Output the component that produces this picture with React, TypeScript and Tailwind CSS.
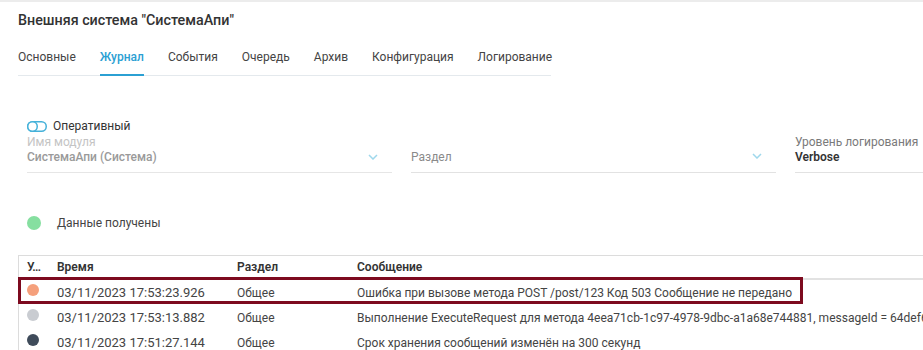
import React from "react";

const tabs = ["Основные", "Журнал", "События", "Очередь", "Архив", "Конфигурация", "Логирование"];

const rows = [
  {
    dot: "bg-[#f5a07c]",
    time: "03/11/2023 17:53:23.926",
    section: "Общее",
    message: "Ошибка при вызове метода POST /post/123 Код 503 Сообщение не передано",
  },
  {
    dot: "bg-[#c9ccd1]",
    time: "03/11/2023 17:53:13.882",
    section: "Общее",
    message: "Выполнение ExecuteRequest для метода 4eea71cb-1c97-4978-9dbc-a1a68e744881, messageId = 64def6",
  },
  {
    dot: "bg-[#3f4b5a]",
    time: "03/11/2023 17:51:27.144",
    section: "Общее",
    message: "Срок хранения сообщений изменён на 300 секунд",
  },
];

function Chevron() {
  return (
    <svg width="10" height="6" viewBox="0 0 10 6" className="shrink-0">
      <path d="M1 1l4 4 4-4" fill="none" stroke="#9fd8ec" strokeWidth="1.5" />
    </svg>
  );
}

function Toggle() {
  return (
    <svg width="20" height="11" viewBox="0 0 20 11" className="shrink-0">
      <rect x="0.75" y="0.75" width="18.5" height="9.5" rx="4.75" fill="none" stroke="#45b1d9" strokeWidth="1.5" />
      <circle cx="5.5" cy="5.5" r="4.75" fill="#fff" stroke="#45b1d9" strokeWidth="1.5" />
    </svg>
  );
}

export default function App() {
  return (
    <div
      className="w-[923px] h-[350px] overflow-hidden bg-white border-t-2 border-[#ececec] text-[#444]"
      style={{ fontFamily: "Roboto, 'Noto Sans', sans-serif" }}
    >
      <div className="pl-[18px]">
        <h1 className="pt-[9px] text-[14.3px] leading-[18px] font-medium text-[#333]">
          Внешняя система "СистемаАпи"
        </h1>

        <div className="mt-[18px] flex gap-6 w-[533px] border-b border-[#e4e9ed]">
          {tabs.map((t) => (
            <div
              key={t}
              className={
                t === "Журнал"
                  ? "text-[12px] leading-5 pb-[6px] -mb-px border-b-2 border-[#2ba0d3] text-[#2ba0d3] font-medium"
                  : "text-[12px] leading-5 pb-[8px] text-[#444]"
              }
            >
              {t}
            </div>
          ))}
        </div>
      </div>

      <div className="pl-[27px] mt-[42px]">
        <div className="flex items-center gap-[6px] h-4">
          <Toggle />
          <span className="text-[12px] text-[#333]">Оперативный</span>
        </div>

        <div className="grid grid-cols-[365px_365px_365px] gap-x-[19px] mt-px">
          <div className="border-b border-[#e6e6e6] pb-[7px]">
            <div className="text-[12px] leading-[14px] text-[#c4c4c4]">Имя модуля</div>
            <div className="flex items-center justify-between pr-[14px]">
              <span className="text-[12px] leading-4 font-medium text-[#9a9a9a]">СистемаАпи (Система)</span>
              <Chevron />
            </div>
          </div>
          <div className="border-b border-[#e2e2e2] pb-[7px] flex items-end">
            <div className="flex w-full items-center justify-between pr-[14px]">
              <span className="text-[12px] leading-4 text-[#8a8a8a] pt-[3px]">Раздел</span>
              <Chevron />
            </div>
          </div>
          <div className="border-b border-[#e2e2e2] pb-[7px]">
            <div className="text-[12px] leading-[14px] text-[#7a7a7a]">Уровень логирования</div>
            <div className="text-[12px] leading-4 font-semibold text-[#333]">Verbose</div>
          </div>
        </div>

        <div className="flex items-center mt-[42px] h-4">
          <span className="w-[14px] h-[14px] rounded-full bg-[#86dfa0]" />
          <span className="ml-4 text-[12px] text-[#444]">Данные получены</span>
        </div>
      </div>

      <div className="ml-[18px] mt-[24px] border-l border-t border-[#dcdcdc] text-[12px]">
        <div className="flex h-[24px] items-center border-b-2 border-[#e2e2e2] font-semibold text-[12px] text-[#333]">
          <div className="w-[29px] pl-2 shrink-0">У…</div>
          <div className="w-[180px] pl-[9px] shrink-0">Время</div>
          <div className="w-[120px] pl-[9px] shrink-0">Раздел</div>
          <div className="pl-[9px] whitespace-nowrap">Сообщение</div>
        </div>

        {rows.map((r, i) =>
          i === 0 ? (
            <div
              key={i}
              className="relative flex w-fit -ml-px -mt-[3px] border-[3px] border-[#7d0a1f] pt-[5px] leading-4 bg-white"
            >
              <div className="w-[27px] pl-[6px] shrink-0">
                <span className={`block w-3 h-3 -mt-px rounded-full ${r.dot}`} />
              </div>
              <div className="w-[180px] pl-[9px] shrink-0 text-[13px]">{r.time}</div>
              <div className="w-[120px] pl-[9px] shrink-0">{r.section}</div>
              <div className="pl-[9px] pr-[8px] whitespace-nowrap">{r.message}</div>
            </div>
          ) : (
            <div key={i} className="flex h-[25px] pt-[6px] leading-4 whitespace-nowrap">
              <div className="w-[29px] pl-2 shrink-0">
                <span className={`block w-3 h-3 -mt-px rounded-full ${r.dot}`} />
              </div>
              <div className="w-[180px] pl-[9px] shrink-0 text-[13px]">{r.time}</div>
              <div className="w-[120px] pl-[9px] shrink-0">{r.section}</div>
              <div className="pl-[9px] whitespace-nowrap">{r.message}</div>
            </div>
          )
        )}
      </div>
    </div>
  );
}
